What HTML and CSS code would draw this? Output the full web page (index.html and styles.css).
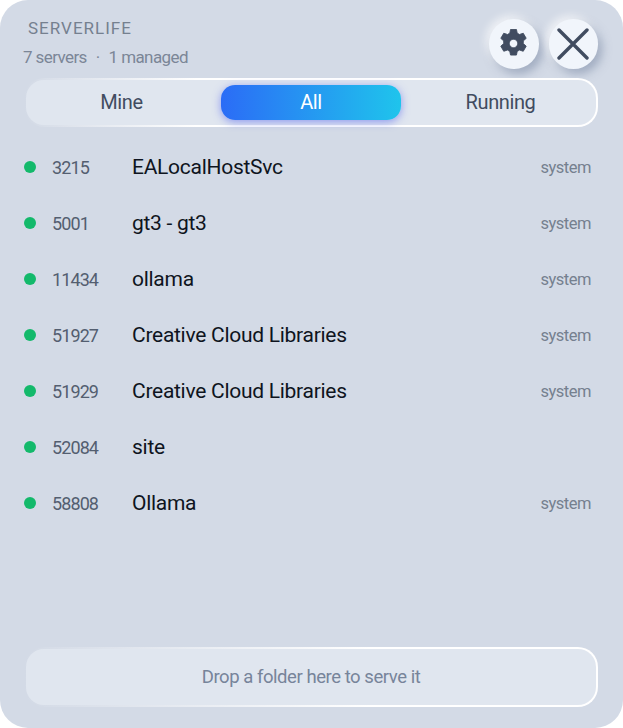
FILE: index.html
```html
<!DOCTYPE html>
<html lang="en">
<head>
<meta charset="utf-8">
<title>ServerLife</title>
<link rel="stylesheet" href="styles.css">
</head>
<body>
<main class="panel">
  <header class="head">
    <div class="titles">
      <div class="brand">SERVERLIFE</div>
      <div class="summary"><span>7 servers</span><span class="sep">·</span><span>1 managed</span></div>
    </div>
    <div class="actions">
      <button class="round" aria-label="Settings">
        <svg class="gear" viewBox="0 0 512 512"><path fill="#414c60" fill-rule="evenodd" d="M204 8h104l14 68q22 8 40 21l66-22 52 90-52 46q4 22 0 46l52 46-52 90-66-22q-18 13-40 21l-14 68H204l-14-68q-22-8-40-21l-66 22-52-90 52-46q-4-24 0-46l-52-46 52-90 66 22q18-13 40-21zM256 182a74 74 0 1 0 .1 0z" stroke="#414c60" stroke-width="16" stroke-linejoin="round"/></svg>
      </button>
      <button class="round" aria-label="Close">
        <svg class="cross" viewBox="0 0 32 32"><path d="M2 2L30 30M30 2L2 30" fill="none" stroke="#414c60" stroke-width="3.4" stroke-linecap="round"/></svg>
      </button>
    </div>
  </header>

  <nav class="tabs">
    <div class="tab">Mine</div>
    <div class="tab active">All</div>
    <div class="tab">Running</div>
  </nav>

  <ul class="list">
    <li class="row"><i class="dot"></i><span class="port">3215</span><span class="name">EALocalHostSvc</span><span class="owner">system</span></li>
    <li class="row"><i class="dot"></i><span class="port">5001</span><span class="name">gt3 - gt3</span><span class="owner">system</span></li>
    <li class="row"><i class="dot"></i><span class="port">11434</span><span class="name">ollama</span><span class="owner">system</span></li>
    <li class="row"><i class="dot"></i><span class="port">51927</span><span class="name">Creative Cloud Libraries</span><span class="owner">system</span></li>
    <li class="row"><i class="dot"></i><span class="port">51929</span><span class="name">Creative Cloud Libraries</span><span class="owner">system</span></li>
    <li class="row"><i class="dot"></i><span class="port">52084</span><span class="name">site</span><span class="owner"></span></li>
    <li class="row"><i class="dot"></i><span class="port">58808</span><span class="name">Ollama</span><span class="owner">system</span></li>
  </ul>

  <div class="drop">Drop a folder here to serve it</div>
</main>
</body>
</html>
```
FILE: styles.css
```css
* { box-sizing: border-box; }
html, body { margin: 0; height: 100%; background: #fff; }
body { font-family: Roboto, "Noto Sans", sans-serif; }
.panel {
  width: 623px; height: 728px; background: #d3dae6; border-radius: 28px;
  padding: 0 25px 0 24px; display: flex; flex-direction: column; overflow: hidden;
  color: #414c60;
}
.head { display: flex; justify-content: space-between; height: 78px; }
.titles { display: flex; flex-direction: column; }
.brand { margin: 18px 0 0 4px; font-size: 17px; line-height: 20px; letter-spacing: 1px; color: #75808f; }
.summary { margin: 9px 0 0 -1px; font-size: 17px; line-height: 20px; color: #7b8697; display: flex; gap: 9px; letter-spacing: -.6px; }
.actions { display: flex; gap: 10px; padding-top: 19px; align-items: flex-start; }
.round {
  width: 49.5px; height: 49.5px; border: 0; padding: 0; border-radius: 50%; background: #f1f5fb;
  display: flex; align-items: center; justify-content: center;
  box-shadow: 4px 5px 10px rgba(110,125,155,.5), -3px -3px 8px rgba(255,255,255,.75);
}
.gear { width: 29px; height: 29px; }
.cross { width: 32px; height: 32px; }
.tabs {
  height: 49px; border-radius: 20px; display: grid; grid-template-columns: 1fr 180px 1fr; column-gap: 4px;
  align-items: center; padding: 0; border: 2px solid transparent;
  background: linear-gradient(#e0e6ef, #e0e6ef) padding-box, linear-gradient(90deg, #d3dae6 0, #ffffff 30%) border-box;
}
.tab { text-align: center; font-size: 20px; letter-spacing: -.4px; color: #414c60; line-height: 35px; }
.active {
  height: 35px; border-radius: 14px; color: #fff;
  background: linear-gradient(90deg, #2b6cf6, #1fc4ec);
  box-shadow: 0 2px 9px rgba(72,90,240,.55);
}
.list { list-style: none; margin: 12px 0 0; padding: 0; flex: 1; }
.row { display: flex; align-items: center; height: 56px; }
.dot { width: 12px; height: 12px; border-radius: 50%; background: #13b96b; }
.port { margin-left: 16px; width: 80px; font-size: 18px; letter-spacing: -.9px; color: #535e70; }
.name { flex: 1; font-size: 21px; letter-spacing: -.28px; color: #0e1420; }
.owner { margin-right: 7px; font-size: 16.5px; letter-spacing: -.5px; color: #75808f; }
.drop {
  height: 60px; margin-bottom: 21px; border-radius: 20px; border: 2px solid transparent;
  display: flex; align-items: center; justify-content: center;
  font-size: 18.5px; letter-spacing: -.45px; color: #77849a;
  background: linear-gradient(#e0e6ef, #e0e6ef) padding-box, linear-gradient(90deg, #d3dae6 0, #ffffff 60%) border-box;
}
```
